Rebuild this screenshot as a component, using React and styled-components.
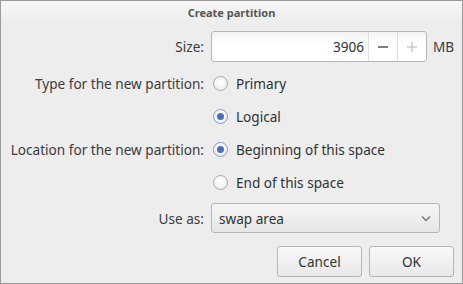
import React from 'react';
import styled, { createGlobalStyle } from 'styled-components';

const Global = createGlobalStyle`
  html, body {
    margin: 0;
    padding: 0;
    background: #ededed;
  }
  body {
    font-family: "Noto Sans", "DejaVu Sans", sans-serif;
    font-size: 13.6px;
    color: #2e3436;
  }
`;

const Window = styled.div`
  box-sizing: border-box;
  width: 463px;
  height: 284px;
  border: 1px solid #9b9b9b;
  background: #ededed;
  display: flex;
  flex-direction: column;
`;

const TitleBar = styled.div`
  height: 23px;
  display: flex;
  align-items: center;
  justify-content: center;
  background: linear-gradient(#f6f6f6, #ededed);
  font-size: 11px;
  font-weight: bold;
  color: #555753;
`;

const Form = styled.div`
  display: grid;
  grid-template-columns: 203px 1fr;
  column-gap: 7px;
  row-gap: 9px;
  padding: 7px 0 0 0;
  align-items: center;
`;

const Label = styled.div`
  text-align: right;
  white-space: nowrap;
  color: #3c3c3c;
`;

const Field = styled.div`
  display: flex;
  align-items: center;
  height: ${p => p.$h || 24}px;
`;

const SpinBox = styled.div`
  box-sizing: border-box;
  width: 216px;
  height: 31px;
  display: flex;
  border: 1px solid #b6b6b3;
  border-radius: 3px;
  background: linear-gradient(#f3f3f3, #ffffff 40%);
  overflow: hidden;
`;

const SpinValue = styled.div`
  flex: 1;
  display: flex;
  align-items: center;
  justify-content: flex-end;
  padding-right: 4px;
  color: #2e3436;
`;

const SpinButton = styled.div`
  width: 28px;
  border-left: 1px solid #e0e0de;
  display: flex;
  align-items: center;
  justify-content: center;
  color: ${p => (p.$disabled ? '#cdcdcd' : '#555753')};
`;

const Unit = styled.span`
  margin-left: 6px;
  color: #3c3c3c;
`;

const RadioCircle = styled.span`
  box-sizing: border-box;
  width: 15px;
  height: 15px;
  border-radius: 50%;
  border: 1px solid ${p => (p.$checked ? '#8a9bbd' : '#a8a8a8')};
  background: radial-gradient(circle at 50% 40%, #ffffff, #e9e9e9);
  display: flex;
  align-items: center;
  justify-content: center;
  margin-left: 2px;
  margin-right: 8px;

  &::after {
    content: '';
    display: ${p => (p.$checked ? 'block' : 'none')};
    width: 7px;
    height: 7px;
    border-radius: 50%;
    background: #4a6fc0;
  }
`;

const Combo = styled.div`
  box-sizing: border-box;
  width: 229px;
  height: 30px;
  border: 1px solid #b6b6b3;
  border-radius: 3px;
  background: linear-gradient(#f5f5f5, #e6e6e6);
  display: flex;
  align-items: center;
  justify-content: space-between;
  padding: 0 8px 0 7px;
`;

const Buttons = styled.div`
  display: flex;
  justify-content: flex-end;
  gap: 7px;
  padding: 13px 8px 0 0;
`;

const Button = styled.div`
  box-sizing: border-box;
  width: 85px;
  height: 31px;
  border: 1px solid #b6b6b3;
  border-radius: 3px;
  background: linear-gradient(#f8f8f8, #e9e9e9);
  display: flex;
  align-items: center;
  justify-content: center;
  color: #2e3436;
`;

function Radio({ checked, children }) {
  return (
    <Field>
      <RadioCircle $checked={checked} />
      {children}
    </Field>
  );
}

export default function App() {
  return (
    <>
      <Global />
      <Window>
        <TitleBar>Create partition</TitleBar>
        <Form>
          <Label>Size:</Label>
          <Field $h={31}>
            <SpinBox>
              <SpinValue>3906</SpinValue>
              <SpinButton>
                <svg width="12" height="12" viewBox="0 0 12 12">
                  <path d="M1 6h10" stroke="currentColor" strokeWidth="1.6" />
                </svg>
              </SpinButton>
              <SpinButton $disabled>
                <svg width="12" height="12" viewBox="0 0 12 12">
                  <path d="M1 6h10M6 1v10" stroke="currentColor" strokeWidth="1.6" />
                </svg>
              </SpinButton>
            </SpinBox>
            <Unit>MB</Unit>
          </Field>

          <Label>Type for the new partition:</Label>
          <Radio>Primary</Radio>
          <span />
          <Radio checked>Logical</Radio>

          <Label>Location for the new partition:</Label>
          <Radio checked>Beginning of this space</Radio>
          <span />
          <Radio>End of this space</Radio>

          <Label>Use as:</Label>
          <Field $h={30}>
            <Combo>
              <span>swap area</span>
              <svg width="10" height="7" viewBox="0 0 10 7">
                <path d="M1 1.5l4 4 4-4" fill="none" stroke="#7a7a7a" strokeWidth="1.5" />
              </svg>
            </Combo>
          </Field>
        </Form>
        <Buttons>
          <Button>Cancel</Button>
          <Button>OK</Button>
        </Buttons>
      </Window>
    </>
  );
}
